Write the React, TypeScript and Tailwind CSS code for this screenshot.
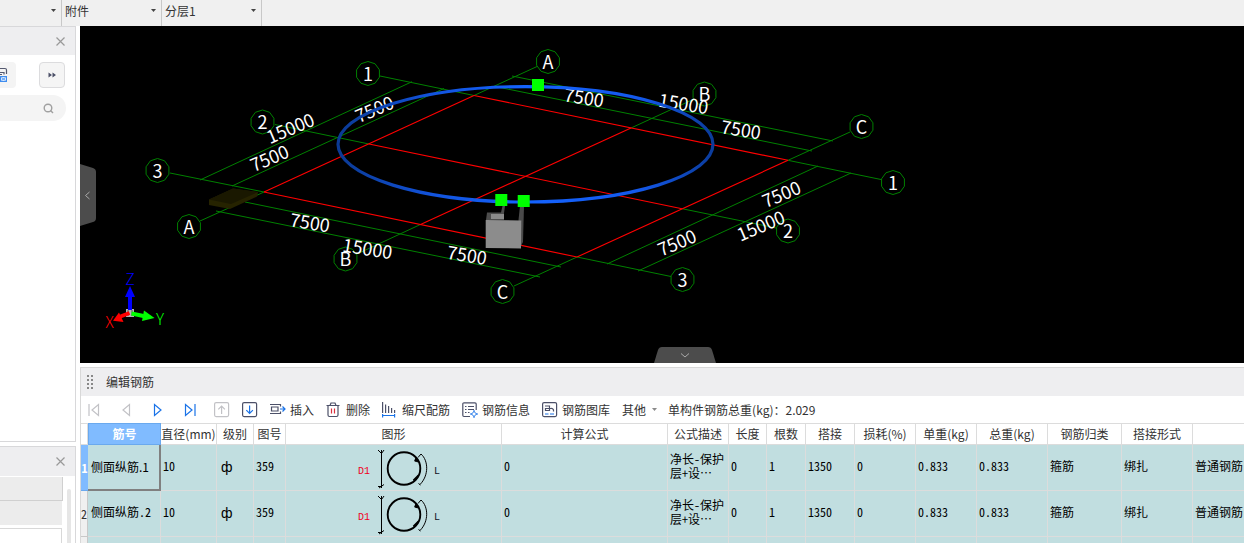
import React from "react";

const CJK = "font-['Noto_Sans_CJK_SC',sans-serif]";

type Pt = [number, number];

const bubbles: { x: number; y: number; label: string }[] = [
  { x: 368, y: 73.5, label: "1" },
  { x: 262.5, y: 122, label: "2" },
  { x: 157.5, y: 170.5, label: "3" },
  { x: 893, y: 182.5, label: "1" },
  { x: 788, y: 231, label: "2" },
  { x: 682.5, y: 279.5, label: "3" },
  { x: 548, y: 61.5, label: "A" },
  { x: 704.5, y: 94, label: "B" },
  { x: 861.5, y: 126.5, label: "C" },
  { x: 189, y: 226.5, label: "A" },
  { x: 345.5, y: 259, label: "B" },
  { x: 502.5, y: 291.5, label: "C" },
];

const greenLines: [number, number, number, number][] = [
  [380, 76, 474, 95.5],
  [788, 160.3, 881, 179.5],
  [275, 124.5, 369, 144],
  [682, 208.7, 776, 228],
  [170, 173, 264, 192],
  [577, 257, 671, 276.5],
  [537, 66.5, 474, 95.5],
  [264, 192, 200, 221],
  [693, 99.5, 631, 128],
  [420, 224.7, 357, 254],
  [850, 132, 788, 160.3],
  [577, 257, 514, 286],
  [512, 76, 833, 141],
  [500, 87.5, 812, 151],
  [412, 81.7, 200, 180],
  [444, 88.5, 232, 186],
  [245, 202, 561, 267],
  [216, 211, 540, 277],
  [818, 166, 607, 264],
  [851, 173, 638, 271],
];

const redLines: [number, number, number, number][] = [
  [474, 95.5, 788, 160.3],
  [369, 144, 682, 208.7],
  [264, 192, 577, 257],
  [474, 95.5, 264, 192],
  [631, 128, 420, 224.7],
  [788, 160.3, 577, 257],
];

const dims: { x: number; y: number; r: number; t: string }[] = [
  { x: 584, y: 98, r: 9, t: "7500" },
  { x: 683.5, y: 104, r: 9, t: "15000" },
  { x: 741, y: 130, r: 9, t: "7500" },
  { x: 374.5, y: 109.5, r: -23, t: "7500" },
  { x: 290.5, y: 128.5, r: -23, t: "15000" },
  { x: 269.5, y: 158.5, r: -23, t: "7500" },
  { x: 310, y: 223, r: 9, t: "7500" },
  { x: 367.5, y: 249, r: 9, t: "15000" },
  { x: 467, y: 255.5, r: 9, t: "7500" },
  { x: 781.5, y: 194.5, r: -23, t: "7500" },
  { x: 761, y: 226, r: -23, t: "15000" },
  { x: 677, y: 243, r: -23, t: "7500" },
];

function ring(x: number, y: number) {
  const pts: Pt[] = [];
  for (let i = 0; i < 10; i++) {
    const a = (i * 36 - 90) * (Math.PI / 180);
    pts.push([x + 12 * Math.cos(a), y + 12 * Math.sin(a)]);
  }
  return pts.map((p) => p.join(",")).join(" ");
}

function Scene() {
  return (
    <svg
      viewBox="80 26 1164 337"
      preserveAspectRatio="xMinYMin slice"
      className={`block h-full w-full ${CJK}`}
      role="img"
      aria-label="轴网三维视图"
    >
      <defs>
        <linearGradient id="hoop" x1="0" x2="1" y1="0" y2="0">
          <stop offset="0" stopColor="#0b3a94" />
          <stop offset="0.25" stopColor="#1253dc" />
          <stop offset="0.5" stopColor="#1463ff" />
          <stop offset="0.8" stopColor="#1459ec" />
          <stop offset="1" stopColor="#0b3c9c" />
        </linearGradient>
      </defs>
      <g stroke="#008000" strokeWidth="1" fill="none">
        {greenLines.map(([a, b, c, d], i) => (
          <line key={i} x1={a} y1={b} x2={c} y2={d} />
        ))}
        {bubbles.map((b, i) => (
          <polygon key={i} points={ring(b.x, b.y)} />
        ))}
      </g>
      <g stroke="#ff0000" strokeWidth="1.1">
        {redLines.map(([a, b, c, d], i) => (
          <line key={i} x1={a} y1={b} x2={c} y2={d} />
        ))}
      </g>
      <polygon points="209,199.5 233,188.5 258,192 257,196.5 230,209 209,205" fill="#262300" />
      <polygon points="209,199.5 233,188.5 258,192 231,204" fill="#1a1800" />
      <g fill="#fff" fontSize="18" textAnchor="middle">
        {dims.map((d, i) => (
          <text key={i} transform={`translate(${d.x} ${d.y}) rotate(${d.r})`} y="6.5">
            {d.t}
          </text>
        ))}
        {bubbles.map((b, i) => (
          <text key={i} x={b.x} y={b.y + 7}>
            {b.label}
          </text>
        ))}
      </g>
      <ellipse cx="525.5" cy="144.3" rx="187.5" ry="57.7" fill="none" stroke="url(#hoop)" strokeWidth="3.2" />
      <polygon points="487,212.5 501,212.5 502.5,206 505,206 504,213 504,220 486,220" fill="#4d4d4d" />
      <rect x="491" y="214" width="13" height="5" fill="#8a8a8a" />
      <polygon points="518.5,220 520,206 524,206 523,242 521,246" fill="#4a4a4a" />
      <polygon points="485.7,220 521.3,220.5 521,248.5 485.7,248" fill="#8c8c8c" />
      <g fill="#00ff00">
        <rect x="532" y="79" width="12" height="12" />
        <rect x="495.3" y="194" width="12" height="12" />
        <rect x="517.7" y="195" width="12" height="12" />
      </g>
      <rect x="126" y="309" width="8" height="8" fill="#b5b5b5" />
      <path d="M128 310v6M132 310v6" stroke="#555" strokeWidth="1" />
      <path d="M128 310V297H125l5-11 5 11h-3v13z" fill="#0000ff" />
      <path d="M129.500 313l-9 3.500" stroke="#f00" strokeWidth="4" />
      <polygon points="113,320.700 119,312.500 123.500,322" fill="#f00" />
      <path d="M131.500 313.500l12 2.500" stroke="#0f0" strokeWidth="4" />
      <polygon points="144,310.500 154.500,318 142,321" fill="#0f0" />
      <g fontSize="16" fontWeight="300" textAnchor="middle">
        <text x="130" y="285" fill="#00f">Z</text>
        <text x="109.500" y="328" fill="#f00">X</text>
        <text x="160" y="325" fill="#0f0">Y</text>
      </g>
    </svg>
  );
}

function Combo({ label, value }: { label: string; value: string }) {
  return (
    <div className="grid w-[100px] shrink-0 border-r border-[#c8c8c8]">
      <select
        aria-label={label}
        className="col-start-1 row-start-1 h-[22px] appearance-none bg-transparent pl-[3px] text-xs text-[#333] outline-none"
      >
        <option>{value}</option>
      </select>
      <svg
        className="pointer-events-none col-start-1 row-start-1 mt-[9px] mr-[5px] justify-self-end"
        width="5"
        height="3"
      >
        <path d="M0 0h5L2.500 3z" fill="#444" />
      </svg>
    </div>
  );
}

function CloseButton() {
  return (
    <button aria-label="关闭" className="mr-2.5 p-0">
      <svg width="9" height="9" className="block" stroke="#999" strokeWidth="1.200">
        <path d="M0.500 0.500l8 8M8.500 0.500l-8 8" />
      </svg>
    </button>
  );
}

function Sidebar() {
  return (
    <aside className="flex w-[76px] shrink-0 flex-col gap-1">
      <section className="flex min-h-0 flex-1 flex-col border-t border-r border-b border-[#d8d8da] bg-white">
        <header className="flex h-[28px] shrink-0 items-center justify-end bg-[#eeeef0]">
          <CloseButton />
        </header>
        <div className="flex justify-between pt-[7px] pr-2.5">
          <button aria-label="构件库" className="flex h-[26px] w-4 items-center rounded-r bg-[#f4f4f4]">
            <svg width="8" height="16" fill="none">
              <path d="M0 1.500h5a1.500 1.500 0 0 1 1.500 1.500v4M0 5.500h4v2M0 7.500h2" stroke="#555a70" strokeWidth="1.200" />
              <rect x="0.500" y="9.500" width="6" height="5" fill="#d6e7fd" stroke="#3f8def" />
              <path d="M1.500 10.500l2 1.500 2-1.500M1.500 13.500l2-1.500 2 1.500" stroke="#3f8def" strokeWidth="0.800" />
            </svg>
          </button>
          <button
            aria-label="展开"
            className="flex h-[26px] w-[26px] items-center justify-center rounded border border-[#dcdcde] bg-[#f5f5f5]"
          >
            <svg width="8" height="6" fill="#4c5068">
              <path d="M0.500 0.500L4 3 0.500 5.500zM4.500 0.500L8 3 4.500 5.500z" />
            </svg>
          </button>
        </div>
        <button
          aria-label="搜索"
          className="mt-[7px] mr-[9px] flex h-[26px] items-center justify-end rounded-r-full bg-[#f4f4f4] pr-3"
        >
          <svg width="11" height="11" fill="none" stroke="#a0a0a0" strokeWidth="1.400">
            <circle cx="5" cy="5" r="3.800" />
            <path d="M7.500 7.500L10 10" />
          </svg>
        </button>
      </section>
      <section className="h-[97px] shrink-0 overflow-hidden border-t border-r border-[#d8d8da] bg-white">
        <header className="flex h-[29px] items-center justify-end bg-[#eeeef0]">
          <CloseButton />
        </header>
        <div className="flex gap-1">
          <div className="w-[63px] pt-px">
            <div className="h-6 border-r border-b border-[#d0d0d0] bg-[#ececec]" />
            <div className="mr-px h-6 bg-[#ececec]" />
            <div className="mt-[3px] mr-px h-6 border-t border-r border-[#d8d8d8]" />
          </div>
          <div className="mt-[13px] h-24 w-1 rounded-full bg-[#e6e6e6]" />
        </div>
      </section>
    </aside>
  );
}

const BLUE = "#1a73e8";
const GREY = "#c2c2c6";
const INK = "#4c5068";

function Nav({ label, d, color }: { label: string; d: string; color: string }) {
  return (
    <button aria-label={label} className="flex w-5 items-center justify-center">
      <svg width="12" height="14" fill="none" stroke={color} strokeWidth="1.200">
        <path d={d} />
      </svg>
    </button>
  );
}

function BoxArrow({ label, up }: { label: string; up?: boolean }) {
  return (
    <button aria-label={label}>
      <svg width="16" height="16" fill="none" strokeWidth="1.200" className="block">
        <rect x="0.600" y="0.600" width="14" height="14" rx="1.500" stroke={up ? GREY : INK} />
        <path
          d={up ? "M7.600 12V4M4.300 7.300L7.600 4l3.300 3.300" : "M7.600 3.500v8M4.300 8.200l3.300 3.300 3.300-3.300"}
          stroke={up ? GREY : BLUE}
        />
      </svg>
    </button>
  );
}

function Tool({ text, children }: { text: string; children: React.ReactNode }) {
  return (
    <button className="flex shrink-0 items-center gap-1 whitespace-nowrap">
      <svg width="16" height="16" fill="none" strokeWidth="1.200" stroke={INK} className="block">
        {children}
      </svg>
      {text}
    </button>
  );
}

function Toolbar() {
  return (
    <div className="flex h-[27px] items-center gap-3 pl-[3px] text-xs text-[#333]">
      <Nav label="第一条" color={GREY} d="M1 1v12M10.500 1.500v11L4 7z" />
      <Nav label="上一条" color={GREY} d="M9.500 1.500v11L3 7z" />
      <Nav label="下一条" color={BLUE} d="M2.500 1.500v11L9 7z" />
      <Nav label="最后一条" color={BLUE} d="M1.500 1.500v11L8 7zM11 1v12" />
      <span className="flex gap-3 pl-0.5">
        <BoxArrow label="上移" up />
        <BoxArrow label="下移" />
      </span>
      <Tool text="插入">
        <path d="M0 2.500h10.500v2M0 11.500h10.500v-2M1.500 5h6.500v4H1.500z" />
        <path d="M10 7h5M12.500 4.500L15 7l-2.500 2.500" stroke={BLUE} />
      </Tool>
      <Tool text="删除">
        <path d="M0.500 3.500h13M4 3.500L5 1h4l1 2.500M2 3.500v9.500a1.500 1.500 0 0 0 1.500 1.500h7A1.500 1.500 0 0 0 12 13V3.500" />
        <path d="M5.500 6.500v5M8.500 6.500v5" stroke="#d9303e" />
      </Tool>
      <Tool text="缩尺配筋">
        <path d="M0.600 0v11M3.600 2.500v8.500M6.600 4v7M9.600 6v5M12.600 8v3" />
        <path d="M0 13.500h13M0.600 12v3.500M12.600 12v3.500" stroke={BLUE} />
      </Tool>
      <Tool text="钢筋信息">
        <path d="M8 14.500H2A1.200 1.200 0 0 1 0.800 13.300V2A1.200 1.200 0 0 1 2 0.800h11A1.200 1.200 0 0 1 14.200 2v6M3 4.500h1.500M6 4.500h6M3 7.500h1.500M6 7.500h6M3 10.500h1.500M6 10.500h1.500" />
        <path d="M12 9.500l2.500 2.500-2.500 2.500-2.500-2.500zM12 8v2M12 14v2M8 12h2M14 12h2" stroke={BLUE} strokeWidth="1" />
      </Tool>
      <Tool text="钢筋图库">
        <rect x="0.600" y="0.600" width="14" height="14" rx="1.500" />
        <path d="M3 4h4.500v4.500H3.500V6.500h5.500A2 2 0 0 1 11.500 8v1.500" />
        <path d="M3 12h3.500M8 12h4" stroke={BLUE} />
      </Tool>
      <span className="flex items-center gap-2.5 whitespace-nowrap">
        <button className="flex items-center gap-1.5">
          其他
          <svg width="6" height="3">
            <path d="M0 0h5L2.500 3z" fill="#8a8a8a" />
          </svg>
        </button>
        <span>单构件钢筋总重(kg)：2.029</span>
      </span>
    </div>
  );
}

function Shape() {
  return (
    <svg width="96" height="44" className="mx-auto block" fill="none" stroke="#000">
      <text x="12" y="28" fontSize="10" fill="#f00020" stroke="none" className="font-['Liberation_Mono',monospace]">
        D1
      </text>
      <path d="M35.500 4v38M32 4l4 4M38 4l-2.500 3.500M32 40.500h3.500M38 38.500L33 42" />
      <circle cx="58" cy="22.500" r="16.300" strokeWidth="1.900" />
      <path d="M69 15.500l1.500-3.500M69 14l3 1.500M67.500 34.500l5-5" strokeWidth="2" />
      <path d="M72 11.500l3-3.500C82.500 14.500 83 29.500 74 38.500M72.500 37.500l2 1.500" />
      <text x="88" y="28" fontSize="10" fill="#112" stroke="none" className="font-['Liberation_Mono',monospace]">
        L
      </text>
    </svg>
  );
}

const widths = [7, 73, 56, 37, 32, 216, 166, 61, 38, 39, 49, 61, 61, 71, 74, 71, 90];
const heads = [
  "直径(mm)", "级别", "图号", "图形", "计算公式", "公式描述", "长度", "根数",
  "搭接", "损耗(%)", "单重(kg)", "总重(kg)", "钢筋归类", "搭接形式", "",
];
const rows = [
  { no: "1", name: "侧面纵筋.1" },
  { no: "2", name: "侧面纵筋.2" },
];

const box = "h-[46px] overflow-hidden border-r border-b border-[#dcdcdc] text-left font-normal";
const cell = `${box} pt-0 pr-0 pb-1 pl-0.5`;

function RebarTable() {
  return (
    <table className="w-[1201px] table-fixed border-separate border-spacing-0 text-xs text-black">
      <colgroup>
        {widths.map((w, i) => (
          <col key={i} style={{ width: w }} />
        ))}
      </colgroup>
      <thead>
        <tr className="h-[22px] text-[#333]">
          <td className="border-t border-r border-b border-[#dcdcdc] p-0" />
          <th className="border border-[#6aa9ee] bg-[#80bbff] p-0 font-bold text-white">筋号</th>
          {heads.map((h, i) => (
            <th key={i} className="border-t border-r border-b border-[#dcdcdc] p-0 font-normal whitespace-nowrap">
              {h}
            </th>
          ))}
        </tr>
      </thead>
      <tbody className="bg-[#c1dee0] [font-feature-settings:'hwid']">
        {rows.map((r, i) => (
          <tr key={r.no}>
            <th
              className={
                i === 0
                  ? "border-b border-[#6aa9ee] bg-[#80bbff] p-0 font-bold text-white"
                  : "border-r border-b border-[#c8c8c8] bg-[#f0f0f0] p-0 font-normal text-[#333]"
              }
            >
              {r.no}
            </th>
            <td
              className={
                i === 0
                  ? "border-r-2 border-b-2 border-[#808080] p-0 pl-[3px] [font-feature-settings:normal]"
                  : `${box} pt-0 pr-0 pb-1 pl-[3px]`
              }
            >
              {r.name}
            </td>
            <td className={cell}>10</td>
            <td className={`${box} pt-0 pr-0 pb-0.5 pl-1`}>
              <span className="font-['Liberation_Sans',sans-serif] text-sm">ф</span>
            </td>
            <td className={cell}>359</td>
            <td className={`${box} p-0`}>
              <Shape />
            </td>
            <td className={cell}>0</td>
            <td className={`${cell} leading-[14px]`}>净长-保护层+设…</td>
            <td className={cell}>0</td>
            <td className={cell}>1</td>
            <td className={cell}>1350</td>
            <td className={cell}>0</td>
            <td className={cell}>0.833</td>
            <td className={cell}>0.833</td>
            <td className={cell}>箍筋</td>
            <td className={cell}>绑扎</td>
            <td className={cell}>普通钢筋</td>
          </tr>
        ))}
        <tr>
          <th className="border-r border-[#c8c8c8] bg-[#f0f0f0] p-0" />
          {widths.slice(1).map((_, i) => (
            <td key={i} className={cell} />
          ))}
        </tr>
      </tbody>
    </table>
  );
}

export default function App() {
  return (
    <div lang="zh-CN" className={`flex h-screen flex-col overflow-hidden bg-white ${CJK}`}>
      <div className="flex h-[26px] shrink-0 bg-[#f0f0f0]">
        <div className="-ml-[38px] flex">
          <Combo label="类型" value="" />
          <Combo label="构件" value="附件" />
          <Combo label="分层" value="分层1" />
        </div>
      </div>
      <div className="flex min-h-0 flex-1 gap-1">
        <Sidebar />
        <main className="flex min-w-0 flex-1 flex-col gap-1">
          <div className="relative min-h-0 flex-1 overflow-hidden bg-black">
            <Scene />
            <button aria-label="收起左侧" className="absolute top-[138px] left-0">
              <svg width="16" height="62" className="block">
                <path d="M0 0l13 4q3 1 3 4v46q0 3-3 4L0 62z" fill="#4c4c4c" />
                <path d="M9.500 28L5.500 31.500l4 3.500" fill="none" stroke="#aaa" />
              </svg>
            </button>
            <button aria-label="收起底部" className="absolute bottom-0 left-[52%] -translate-x-1/2">
              <svg width="62" height="16" className="block">
                <path d="M0 16L4 3q1-3 4-3h46q3 0 4 3l4 13z" fill="#4c4c4c" />
                <path d="M27 6.500l4 3.500 4-3.500" fill="none" stroke="#aaa" />
              </svg>
            </button>
          </div>
          <section className="h-[176px] shrink-0 overflow-hidden border-t border-l border-[#d8d8d8] bg-white">
            <header className="flex h-7 items-center gap-3 bg-[#eeeef0] pl-1.5 text-xs text-[#333]">
              <svg width="7" height="14" fill="#888">
                {[0, 4, 8, 12].map((y) => (
                  <g key={y}>
                    <rect x="0" y={y} width="2" height="2" />
                    <rect x="4" y={y} width="2" height="2" />
                  </g>
                ))}
              </svg>
              <h2>编辑钢筋</h2>
            </header>
            <Toolbar />
            <RebarTable />
          </section>
        </main>
      </div>
    </div>
  );
}
